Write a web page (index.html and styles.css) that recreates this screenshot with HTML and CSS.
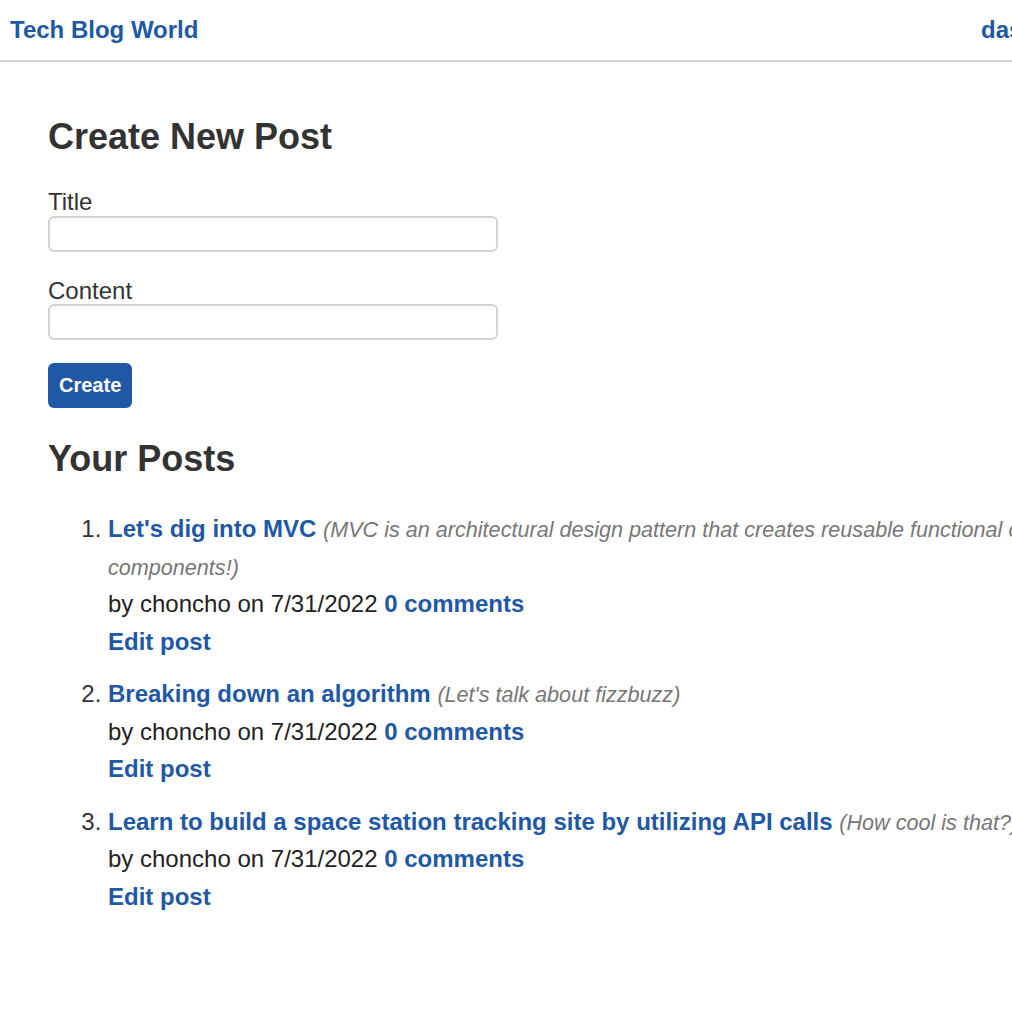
FILE: index.html
```html
<!DOCTYPE html>
<html lang="en">
<head>
<meta charset="utf-8">
<title>Tech Blog World</title>
<link rel="stylesheet" href="styles.css">
</head>
<body>
<div class="page">
  <header class="topbar">
    <a class="brand" href="#">Tech Blog World</a>
    <nav class="nav">
      <a href="#">dashboard</a>
      <a href="#">logout</a>
    </nav>
  </header>
  <main class="main">
    <h2 class="heading">Create New Post</h2>
    <form class="post-form">
      <label class="field-label" for="title">Title</label>
      <input class="field-input" id="title" type="text">
      <label class="field-label field-label-gap" for="content">Content</label>
      <input class="field-input" id="content" type="text">
      <button class="btn" type="button">Create</button>
    </form>
    <h2 class="heading">Your Posts</h2>
    <ol class="posts">
      <li class="post">
        <div class="post-title"><a href="#">Let's dig into MVC</a> <em class="post-desc">(MVC is an architectural design pattern that creates reusable functional code components!)</em></div>
        <div class="post-meta">by choncho on 7/31/2022 <a href="#">0 comments</a></div>
        <div><a href="#">Edit post</a></div>
      </li>
      <li class="post">
        <div class="post-title"><a href="#">Breaking down an algorithm</a> <em class="post-desc">(Let's talk about fizzbuzz)</em></div>
        <div class="post-meta">by choncho on 7/31/2022 <a href="#">0 comments</a></div>
        <div><a href="#">Edit post</a></div>
      </li>
      <li class="post">
        <div class="post-title"><a href="#">Learn to build a space station tracking site by utilizing API calls</a> <em class="post-desc">(How cool is that?)</em></div>
        <div class="post-meta">by choncho on 7/31/2022 <a href="#">0 comments</a></div>
        <div><a href="#">Edit post</a></div>
      </li>
    </ol>
  </main>
</div>
</body>
</html>
```

FILE: styles.css
```css
html, body {
  margin: 0;
  padding: 0;
  overflow: hidden;
  background: #fff;
}
body {
  font-family: "Liberation Sans", Arial, Helvetica, sans-serif;
  font-size: 24px;
  color: #333;
}
a {
  color: #2158a6;
  font-weight: bold;
  text-decoration: none;
}
.page {
  width: 1200px;
}
.topbar {
  height: 60px;
  padding: 0 10px;
  display: flex;
  align-items: center;
  justify-content: space-between;
  border-bottom: 2px solid #d0d0d0;
}
.nav {
  display: flex;
  gap: 13px;
}
.main {
  padding: 24px 48px 0;
}
.heading {
  font-size: 36px;
  font-weight: bold;
  color: #333;
  margin: 30px 0;
  line-height: normal;
}
.post-form {
  display: flex;
  flex-direction: column;
  align-items: flex-start;
}
.field-label {
  display: block;
  line-height: 27.6px;
}
.field-label-gap {
  margin-top: 25px;
}
.field-input {
  box-sizing: border-box;
  width: 450px;
  height: 36px;
  margin: 0;
  border: 2px solid #d3d3d3;
  border-radius: 6px;
  font: inherit;
  font-size: 20px;
  padding: 0 8px;
  background: #fff;
}
.btn {
  margin-top: 23px;
  box-sizing: border-box;
  height: 45px;
  padding: 0 11px;
  border: none;
  border-radius: 6px;
  background: #2158a6;
  color: #fff;
  font-family: "Liberation Sans", Arial, Helvetica, sans-serif;
  font-size: 20px;
  font-weight: bold;
}
.posts {
  margin: 0;
  padding-left: 60px;
  line-height: 37.5px;
}
.post {
  margin-bottom: 15px;
}
.post-desc {
  color: #777;
  font-weight: normal;
  font-size: 21.6px;
  line-height: 20px;
}
.post-meta {
  color: #222;
}
```
